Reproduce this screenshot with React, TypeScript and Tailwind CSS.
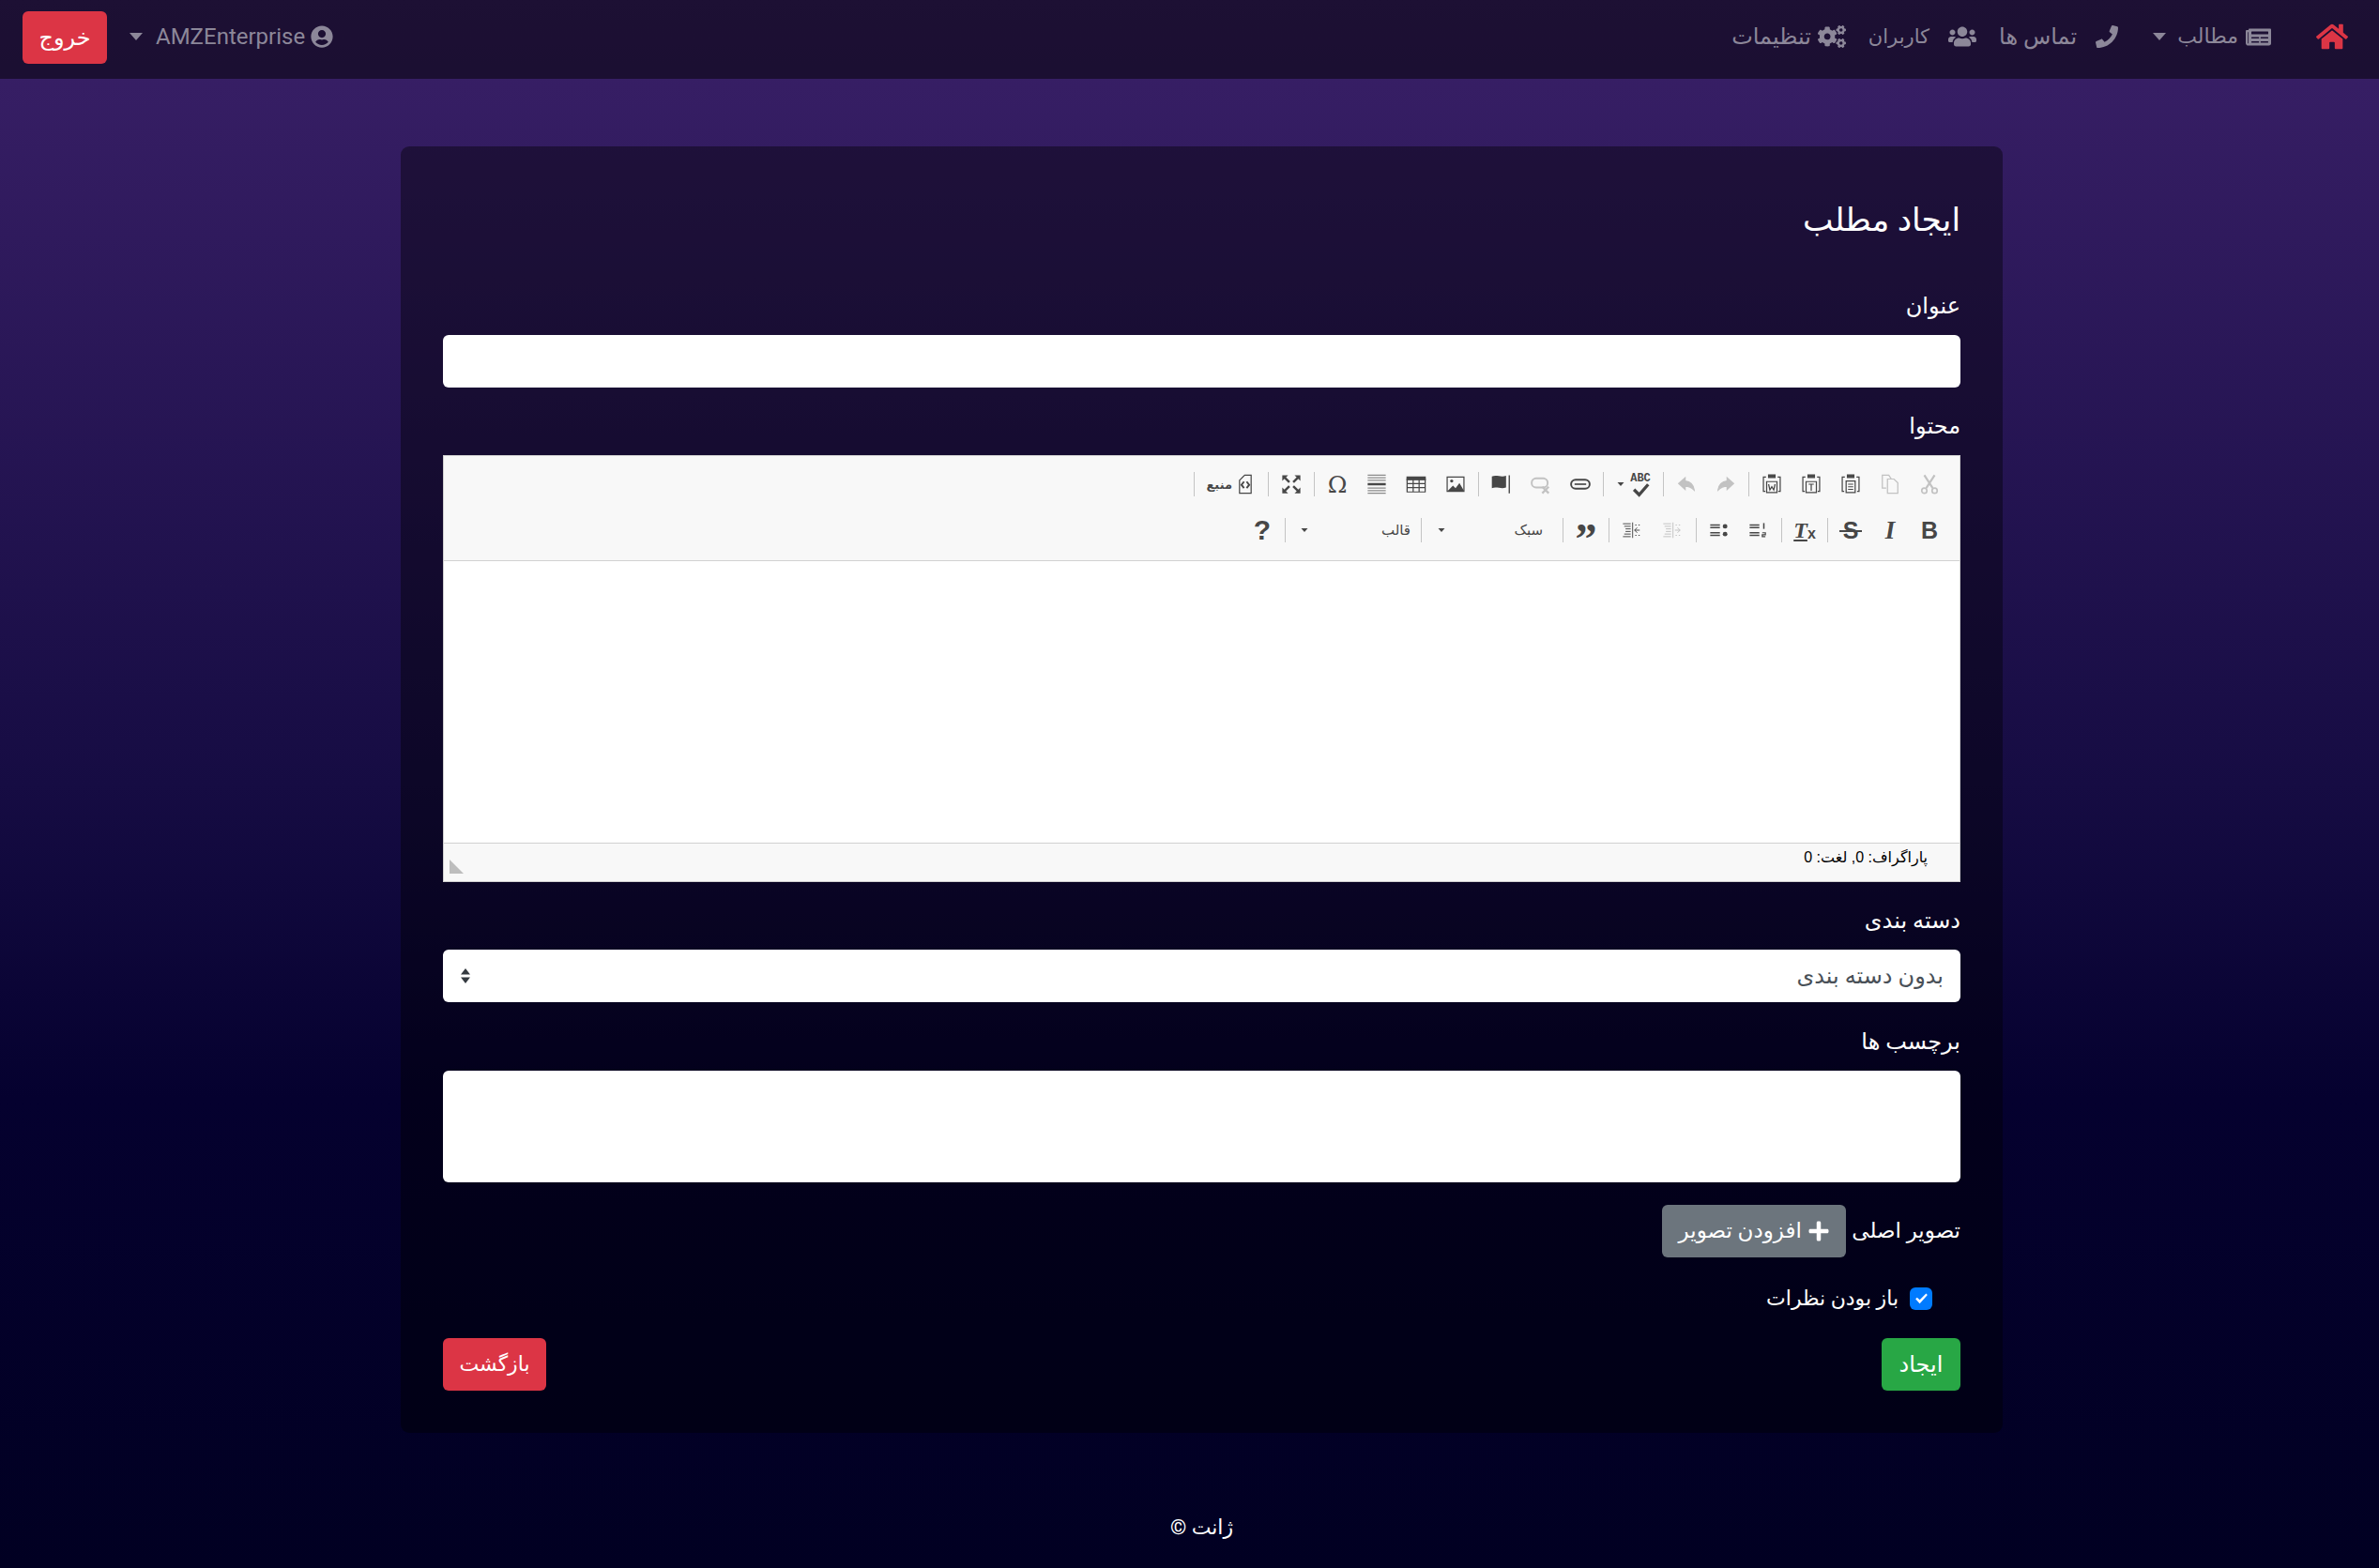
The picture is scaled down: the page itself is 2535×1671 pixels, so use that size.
import { ReactNode } from "react";
import { FaCogs, FaHome, FaNewspaper, FaPhone, FaPlus, FaUserCircle, FaUsers } from "react-icons/fa";

const stack = "font-['Roboto','DejaVu_Sans',sans-serif]";

function Caret({ className = "" }: { className?: string }) {
  return <span className={`inline-block border-x-[7px] border-t-[8px] border-x-transparent border-t-current ${className}`} />;
}

function NavItem({ icon, label, caret, className = "", textClass = "" }: { icon: ReactNode; label: string; caret?: boolean; className?: string; textClass?: string }) {
  return (
    <a className={`flex items-center text-[#8c8799] ${className}`}>
      {icon}
      <span className={textClass}>{label}</span>
      {caret && <Caret className="mr-[12px]" />}
    </a>
  );
}

function Sep() {
  return <span className="mx-[3px] h-[26px] w-px bg-[#c4c4c4]" />;
}

function Tool({ children, off, w = "w-[42px]" }: { children: ReactNode; off?: boolean; w?: string }) {
  return <span className={`flex h-[30px] ${w} items-center justify-center text-[#474747] ${off ? "opacity-30" : ""}`}>{children}</span>;
}

function Ico({ children }: { children: ReactNode }) {
  return (
    <svg viewBox="0 0 16 16" width="22" height="22" fill="none" stroke="#474747" strokeWidth="0.9">
      {children}
    </svg>
  );
}

const clip = (
  <>
    <path d="M3.500 2.500H1.500v11h1.500M12.500 2.500h2v11h-1.500" />
    <path d="M5.500.8h5v2h-5z" fill="#474747" />
  </>
);

function Toolbar() {
  return (
    <div className="border-b border-[#d1d1d1] bg-[#f8f8f8] pr-[11px] pt-[15px] pb-[17px] font-['Liberation_Sans','DejaVu_Sans',sans-serif]">
      <div className="flex items-center">
        <Tool off>
          <Ico>
            <path d="M4 1l6.500 10M12 1L5.500 11" strokeWidth="1.600" />
            <circle cx="4" cy="13" r="2" strokeWidth="1.200" />
            <circle cx="12" cy="13" r="2" strokeWidth="1.200" />
          </Ico>
        </Tool>
        <Tool off>
          <Ico>
            <path d="M5 11H2V1h5l2 3M6 5v10h8V7l-3-3H6z" />
          </Ico>
        </Tool>
        <Tool>
          <Ico>
            {clip}
            <path d="M4.500 5.500h7v9h-7zM6 8h4M6 10h4M6 12h4" />
          </Ico>
        </Tool>
        <Tool>
          <Ico>
            {clip}
            <path d="M4 6h8v8.500H4z" />
            <path d="M6 8h4M8 8v5" />
          </Ico>
        </Tool>
        <Tool>
          <Ico>
            {clip}
            <path d="M4 6h8v8.500H4z" />
            <path d="M5.500 8l1 4.500L8 10l1.500 2.500 1-4.500" />
          </Ico>
        </Tool>
        <Sep />
        <Tool off>
          <Ico>
            <path d="M9 3l5 4.500L9 12V9.500c-3 0-5 1-7 3 .5-4 3-6.500 7-7z" fill="#474747" />
          </Ico>
        </Tool>
        <Tool off>
          <Ico>
            <path d="M7 3L2 7.500 7 12V9.500c3 0 5 1 7 3-.5-4-3-6.500-7-7z" fill="#474747" />
          </Ico>
        </Tool>
        <Sep />
        <span className="flex h-[30px] w-[57px] items-center justify-start gap-[1px] pr-[8px] text-[#474747]">
          <span className="relative flex h-[24px] w-[26px] items-start justify-center">
            <span className="font-['Liberation_Mono'] text-[12px] leading-[12px] font-bold">ABC</span>
            <svg viewBox="0 0 16 16" width="22" height="22" className="absolute left-[2px] top-[4px]" fill="none" stroke="#474747" strokeWidth="2.400">
              <path d="M3 10l4 4 7-8" />
            </svg>
          </span>
          <Caret className="scale-50" />
        </span>
        <Sep />
        <Tool>
          <Ico>
            <rect x=".8" y="4.500" width="14.400" height="7" rx="3.500" strokeWidth="1.400" />
            <path d="M3.500 8h9" strokeWidth="1.200" />
          </Ico>
        </Tool>
        <Tool off>
          <Ico>
            <rect x=".8" y="3.500" width="12.400" height="7" rx="3.500" strokeWidth="1.400" />
            <path d="M9 10l5 5M14 10l-5 5" strokeWidth="1.600" />
          </Ico>
        </Tool>
        <Tool>
          <Ico>
            <path d="M.500 2c3.800-1.500 7 1 11-.500v9c-4 1.500-7.200-1-11 .5z" fill="#474747" stroke="none" />
            <path d="M14 1V15" strokeWidth="1" />
          </Ico>
        </Tool>
        <Sep />
        <Tool>
          <Ico>
            <path d="M1.500 2.500h13v11h-13z" />
            <circle cx="5" cy="5.500" r="1.200" fill="#474747" stroke="none" />
            <path d="M2 13l4-4 2 2 3-4 3.500 6z" fill="#474747" stroke="none" />
          </Ico>
        </Tool>
        <Tool>
          <Ico>
            <path d="M.500 2h15v3H.500z" fill="#474747" stroke="none" />
            <path d="M1 4h14v10H1zM1 7.500h14M1 10.700h14M5.700 4v10M10.300 4v10" />
          </Ico>
        </Tool>
        <Tool>
          <Ico>
            <path d="M1 1h14M1 3h14M1 5h14M1 11h14M1 13h14M1 15h14" stroke="#8a8a8a" strokeWidth="0.800" />
            <path d="M1 8h14" strokeWidth="1.800" />
          </Ico>
        </Tool>
        <Tool>
          <span className="font-['DejaVu_Serif'] text-[25px] leading-none">Ω</span>
        </Tool>
        <Sep />
        <Tool>
          <Ico>
            <path d="M1 5.500V1h4.500L1 5.500zM15 5.500V1h-4.500L15 5.500zM1 10.500V15h4.500L1 10.500zM15 10.500V15h-4.500l4.500-4.500z" fill="#474747" stroke="none" />
            <path d="M3 3l3.500 3.500M13 3L9.500 6.500M3 13l3.500-3.500M13 13L9.500 9.500" strokeWidth="1.800" />
          </Ico>
        </Tool>
        <Sep />
        <span className="flex h-[30px] w-[72px] items-center justify-start gap-[3px] pr-[10px]">
          <Ico>
            <path d="M3.500 5l4-4h5v14h-9z" />
            <path d="M7 6L5 8.500 7 11M9 6l2 2.500L9 11" strokeWidth="1.400" />
          </Ico>
          <span className="text-[13px] leading-none font-bold text-[#474747]">منبع</span>
        </span>
        <Sep />
      </div>
      <div className="mt-[19px] flex items-center">
        <Tool>
          <span className="text-[25px] font-bold leading-none">B</span>
        </Tool>
        <Tool>
          <span className="font-['Liberation_Serif'] text-[27px] font-bold italic leading-none">I</span>
        </Tool>
        <Tool>
          <span className="relative text-[25px] font-bold leading-none">
            S<span className="absolute left-[-4px] right-[-4px] top-[12px] h-[2px] bg-[#474747]" />
          </span>
        </Tool>
        <Sep />
        <Tool>
          <span dir="ltr" className="flex items-end">
            <span className="font-['Liberation_Serif'] text-[24px] font-bold italic leading-none underline">T</span>
            <span className="text-[16px] font-bold leading-[16px]">x</span>
          </span>
        </Tool>
        <Sep />
        <Tool>
          <Ico>
            <path d="M1 4h7.500M1 6h7.500M1 10h7.500M1 12h7.500" strokeWidth="1" />
            <path d="M12 2.500v4.500" strokeWidth="1.100" />
            <path d="M10.800 10h2.400v1.500h-2.400V13h2.400" strokeWidth="0.900" />
          </Ico>
        </Tool>
        <Tool>
          <Ico>
            <path d="M1 4h7.500M1 6h7.500M1 10h7.500M1 12h7.500" strokeWidth="1" />
            <circle cx="12.500" cy="5" r="1.800" fill="#474747" stroke="none" />
            <circle cx="12.500" cy="11" r="1.800" fill="#474747" stroke="none" />
          </Ico>
        </Tool>
        <Sep />
        <Tool off w="w-[44px]">
          <Ico>
            <path d="M1 3h6M2 5h5M3 7h4M3 9h4M2 11h5M1 13h6M8.500 2v12M10.500 4h1M13 4h1M10.500 12h1M13 12h1M10 8h4M12 6l2 2-2 2" strokeWidth="0.700" />
          </Ico>
        </Tool>
        <Tool>
          <Ico>
            <path d="M1 3h6M2 5h5M3 7h4M3 9h4M2 11h5M1 13h6M8.500 2v12M10.500 4h1M13 4h1M10.500 12h1M13 12h1M10 8h4M12 6l-2 2 2 2" strokeWidth="0.700" />
          </Ico>
        </Tool>
        <Sep />
        <Tool>
          <span className="font-['Liberation_Serif'] text-[46px] font-bold leading-[46px] pt-[20px]">”</span>
        </Tool>
        <Sep />
        <span className="flex h-[30px] w-[144px] items-center justify-between pl-[11px] pr-[18px] text-[15px] text-[#474747]">
          <span>سبک</span>
          <Caret className="scale-50" />
        </span>
        <Sep />
        <span className="flex h-[30px] w-[138px] items-center justify-between pl-[10px] pr-[8px] text-[15px] text-[#474747]">
          <span>قالب</span>
          <Caret className="scale-50" />
        </span>
        <Sep />
        <Tool>
          <span className="text-[30px] font-bold leading-none">?</span>
        </Tool>
      </div>
    </div>
  );
}

function Field({ label, children, className = "mb-[24px]" }: { label: string; children: ReactNode; className?: string }) {
  return (
    <div className={className}>
      <label className="mb-[14px] block leading-[34px]">{label}</label>
      {children}
    </div>
  );
}

export default function App() {
  return (
    <div
      dir="rtl"
      className={`${stack} flex min-h-[1671px] flex-col bg-[linear-gradient(180deg,#3a2068_0%,#160c43_50%,#05012f_70%,#010022_100%)] text-[24px] leading-[36px] text-white`}
    >
      <nav className="flex h-[84px] items-start justify-between bg-[#000]/50 pl-[24px] pr-[33px] pt-[12px]">
        <div className="flex h-[54px] items-center gap-[24px]">
          <FaHome className="ml-[24px] text-[34px] text-[#dc3545]" />
          <NavItem icon={<FaNewspaper className="ml-[8px] text-[27px]" />} label="مطالب" caret textClass="text-[22px]" className="ml-[13px]" />
          <NavItem icon={<FaPhone className="ml-[20px] text-[24px]" />} label="تماس ها" />
          <NavItem icon={<FaUsers className="ml-[20px] text-[30px]" />} label="کاربران" textClass="text-[21px]" />
          <NavItem icon={<FaCogs className="ml-[7px] text-[30px]" />} label="تنظیمات" />
        </div>
        <div className="flex items-start gap-[24px]">
          <a className="flex h-[54px] items-center gap-[6px] text-[#8c8799]">
            <FaUserCircle />
            <span>AMZEnterprise</span>
            <Caret className="mr-[8px]" />
          </a>
          <button className="h-[56px] w-[90px] rounded-[6px] bg-[#dc3545] text-white">خروج</button>
        </div>
      </nav>

      <main className="ml-[427px] mr-[401px] mt-[72px] w-[1707px] rounded-[9px] bg-[#000]/40 p-[45px]">
        <h3 className="mb-[50px] mt-[8px] text-[34.500px] leading-[50px]">ایجاد مطلب</h3>
        <Field label="عنوان">
          <input className="block h-[56px] w-full rounded-[6px] bg-white" />
        </Field>
        <Field label="محتوا">
          <div className="border border-[#d1d1d1] bg-white">
            <Toolbar />
            <div className="h-[300px] bg-white" />
            <div className="flex h-[41px] items-start justify-between border-t border-[#d1d1d1] bg-[#f8f8f8] pr-[34px] font-['Liberation_Sans','DejaVu_Sans',sans-serif] text-[16px] leading-[20px] text-black">
              <span className="mt-[5px]">پاراگراف: 0, لغت: 0</span>
              <span className="ml-[6px] mt-[17px] border-b-[15px] border-r-[15px] border-b-[#bdbdbd] border-r-transparent" />
            </div>
          </div>
        </Field>
        <Field label="دسته بندی" className="mb-[25px]">
          <div className="flex h-[56px] items-center justify-between rounded-[6px] bg-white px-[18px] text-[#495057]">
            <span>بدون دسته بندی</span>
            <svg viewBox="0 0 12 16" width="12" height="16" fill="#343a40">
              <path d="M6 0l5 6.500H1zM6 16L1 9.500h10z" />
            </svg>
          </div>
        </Field>
        <Field label="برچسب ها">
          <textarea className="block h-[119px] w-full resize-none rounded-[6px] bg-white" />
        </Field>
        <div className="mb-[26px] flex items-center gap-[6px]">
          <span className="text-[23px]">تصویر اصلی</span>
          <button className="flex h-[56px] w-[196px] items-center justify-center gap-[6px] rounded-[6px] bg-[#6c757d] text-[23px] text-white">
            <FaPlus className="text-[24px]" />
            افزودن تصویر
          </button>
        </div>
        <div className="mb-[24px] flex items-center gap-[12px] pr-[30px]">
          <span className="flex size-[24px] items-center justify-center rounded-[6px] bg-[#007bff]">
            <svg viewBox="0 0 8 8" width="15" height="15" fill="#fff">
              <path d="M6.600.750l-3.600 3.700L1.500 3 .6 3.900l2.400 2.600L7.400 1.600z" />
            </svg>
          </span>
          <span className="text-[22px]">باز بودن نظرات</span>
        </div>
        <div className="flex justify-between">
          <button className="h-[56px] w-[84px] rounded-[6px] bg-[#28a745] text-white">ایجاد</button>
          <button className="h-[56px] w-[110px] rounded-[6px] bg-[#dc3545] text-[22px] text-white">بازگشت</button>
        </div>
      </main>

      <footer className="mt-[83px] pl-[26px] text-center text-[22px]">ژانت ©</footer>
    </div>
  );
}
